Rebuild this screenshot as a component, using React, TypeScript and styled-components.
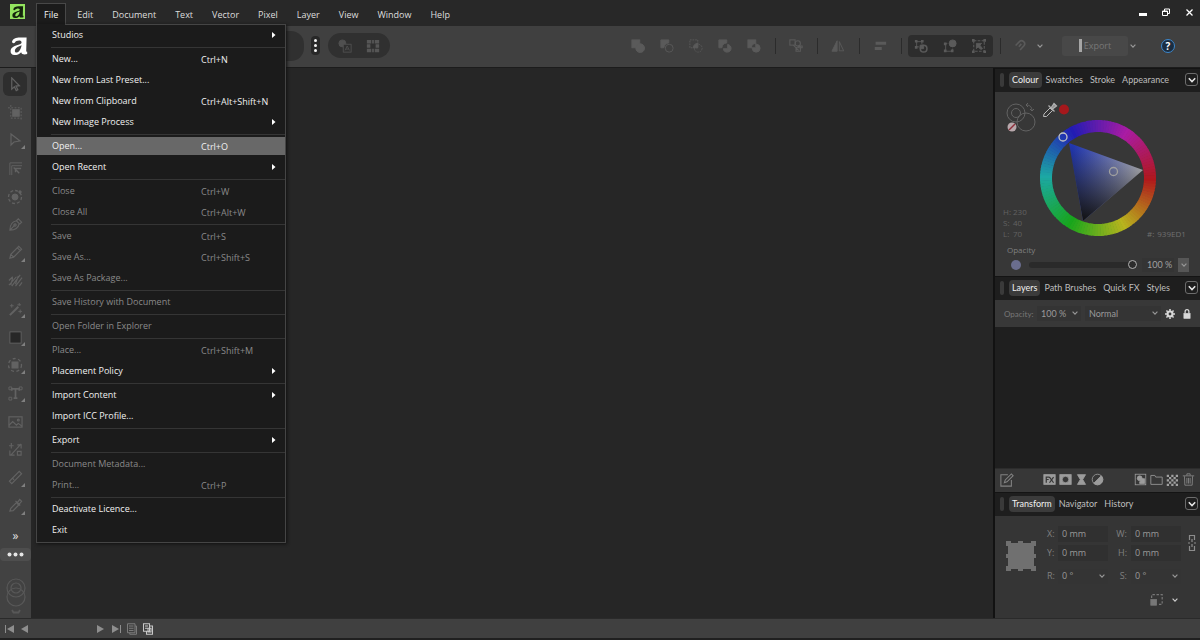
import React from 'react';
import styled, { createGlobalStyle, css } from 'styled-components';

const Global = createGlobalStyle`
  * { box-sizing: border-box; }
  html, body, #root { height: 100%; }
  body {
    margin: 0;
    background: #262626;
    color: #dcdcdc;
    font: 9px/12px "Open Sans", "Noto Sans", sans-serif;
    overflow: hidden;
  }
  button, input, select { font: inherit; color: inherit; border: 0; margin: 0; padding: 0; background: none; border-radius: 0; outline: none; }
  svg { display: block; flex: none; }
`;

/* ---------- shell ---------- */

const Shell = styled.div`
  display: flex;
  flex-direction: column;
  min-height: 100vh;
`;

const TitleBar = styled.header`
  display: flex;
  align-items: stretch;
  height: 26px;
  flex: none;
  padding: 3px 6px 0 10px;
  background: #282828;
`;

const AppMark = styled.div`
  width: 15px;
  height: 15px;
  margin: 1px 11px 0 0;
  background: #93e45f;
  display: grid;
  place-items: center;
`;

const MenuNav = styled.nav`
  display: flex;
  gap: 3px;
  flex: 1;
`;

const MenuSlot = styled.div`
  position: relative;
  display: flex;
`;

const MenuTitle = styled.button<{ $open?: boolean }>`
  padding: 0 7px;
  height: 22px;
  border: 1px solid transparent;
  border-bottom: 0;
  color: #dedede;
  ${(p) =>
    p.$open &&
    css`
      background: #1b1b1b;
      border-color: #484848;
      color: #f4f4f4;
    `}
`;

const WindowButtons = styled.div`
  display: flex;
  align-items: center;
  gap: 13px;
  height: 18px;
`;

const IconButton = styled.button<{ $size?: number; $color?: string }>`
  width: ${(p) => p.$size ?? 14}px;
  height: ${(p) => p.$size ?? 14}px;
  display: grid;
  place-items: center;
  flex: none;
  color: ${(p) => p.$color ?? '#5a5a5a'};
`;

/* ---------- drop-down menu ---------- */

const Menu = styled.div`
  position: absolute;
  z-index: 5;
  top: 21px;
  left: 0;
  width: 250px;
  padding-top: 1px;
  display: flex;
  flex-direction: column;
  background: #1b1b1b;
  border: 1px solid #454545;
  box-shadow: 1px 1px 3px #111;

  &::before {
    content: "";
    position: absolute;
    top: -1px;
    left: 0;
    width: 28px;
    height: 1px;
    background: #1b1b1b;
  }
`;

const MenuRow = styled.button<{ $dim?: boolean; $active?: boolean }>`
  display: grid;
  grid-template-columns: 149px 1fr 13px;
  align-items: center;
  height: 18px;
  margin: 0 0 3px;
  padding-left: 15px;
  text-align: left;
  white-space: nowrap;
  color: ${(p) => (p.$dim ? '#8a8a8a' : '#f0f0f0')};
  background: ${(p) => (p.$active ? '#686868' : 'transparent')};
`;

const Shortcut = styled.span`
  padding-top: 2px;
`;

const MenuRule = styled.hr`
  width: calc(100% - 14px);
  height: 1px;
  margin: 0 0 2px 14px;
  border: 0;
  background: #353535;
`;

/* ---------- toolbar ---------- */

const Toolbar = styled.div`
  display: flex;
  align-items: center;
  flex: none;
  height: 42px;
  padding: 0 25px 2px 10px;
  background: #404040;
  border-bottom: 1px solid #1c1c1c;
`;

const ToolbarLead = styled.div`
  display: flex;
  align-items: center;
  flex: 1;
  padding-left: 26px;
`;

const Pill = styled.div<{ $width: number; $height: number }>`
  display: flex;
  align-items: center;
  justify-content: center;
  gap: 14px;
  width: ${(p) => p.$width}px;
  height: ${(p) => p.$height}px;
  border-radius: 13px;
  background: #303030;
`;

const Kebab = styled.button`
  width: 9px;
  height: 19px;
  margin: 0 8px 0 7px;
  border-radius: 4px;
  background: #282828;
  color: #f2f2f2;
  display: grid;
  place-items: center;
`;

const Spacer = styled.div`
  flex: 1;
`;

const Cluster = styled.div`
  display: flex;
  gap: 15px;
`;

const Snapping = styled(Cluster)`
  align-items: center;
  padding: 0 7px 0 6px;
  height: 22px;
  border-radius: 4px;
  background: #2d2d2d;
`;

const Divider = styled.span<{ $before: number; $after: number }>`
  width: 1px;
  height: 16px;
  margin: 0 ${(p) => p.$after}px 0 ${(p) => p.$before}px;
  background: #2b2b2b;
`;

const ChevronButton = styled.button<{ $before?: number; $after?: number; $color?: string }>`
  width: 8px;
  height: 12px;
  display: grid;
  place-items: center;
  color: ${(p) => p.$color ?? '#9a9a9a'};
  margin: 0 ${(p) => p.$after ?? 0}px 0 ${(p) => p.$before ?? 0}px;
`;

const ExportButton = styled.button`
  display: flex;
  align-items: center;
  justify-content: center;
  gap: 2px;
  width: 66px;
  height: 20px;
  border-radius: 3px;
  background: #484848;
  color: #777;

  &::before {
    content: "";
    width: 3px;
    height: 13px;
    background: #a6a6a6;
  }
`;

const HelpButton = styled.button`
  width: 14px;
  height: 14px;
  border: 1px solid #3d87cc;
  border-radius: 50%;
  background: #1b2d40;
  color: #fff;
  font-size: 10px;
  font-weight: 700;
  line-height: 12px;
`;

/* ---------- body ---------- */

const Body = styled.main`
  display: flex;
  flex: 1;
  min-height: 0;
`;

const Tools = styled.aside`
  width: 31px;
  flex: none;
  display: flex;
  flex-direction: column;
  padding-top: 4px;
  background: #424242;
`;

const ToolList = styled.div`
  flex: 1;
  display: flex;
  flex-direction: column;
  justify-content: space-between;
  align-items: flex-start;
  padding-left: 3px;
`;

const Tool = styled.button<{ $active?: boolean; $more?: boolean }>`
  position: relative;
  width: 24px;
  height: 24px;
  display: grid;
  place-items: center;
  border-radius: 6px;
  color: #626262;
  background: ${(p) => (p.$active ? '#2e2e2e' : 'transparent')};
  ${(p) =>
    p.$more &&
    css`
      &::after {
        content: "";
        position: absolute;
        right: 2px;
        bottom: 3px;
        border: 2px solid;
        border-color: transparent #808080 #808080 transparent;
      }
    `}
`;

const ToolFooter = styled.div`
  display: flex;
  flex-direction: column;
  align-items: center;
  padding: 12px 0 2px;
  color: #585858;
`;

const Expand = styled.button`
  height: 12px;
  color: #e0e0e0;
  font-size: 12px;
`;

const MoreTools = styled.button`
  width: 100%;
  height: 13px;
  margin: 6px 0 16px;
  border-radius: 4px;
  background: #4e4e4e;
  color: #e6e6e6;
  display: grid;
  place-items: center;
`;

const Canvas = styled.section`
  flex: 1;
  background: #262626;
`;

/* ---------- panels ---------- */

const Panels = styled.aside`
  width: 207px;
  flex: none;
  display: flex;
  flex-direction: column;
  border-left: 2px solid #121212;
  background: #373737;
`;

const TabBar = styled.div`
  display: flex;
  align-items: center;
  gap: 1px;
  height: 24px;
  flex: none;
  padding: 0 2px 2px 5px;
  background: #1e1e1e;
  border-top: 1px solid #141414;
`;

const Grip = styled.span`
  width: 4px;
  height: 14px;
  margin-right: 4px;
  border-radius: 2px;
  background: #3a3a3a;
`;

const Tab = styled.button<{ $active?: boolean }>`
  height: 16px;
  padding: 0 3px;
  border-radius: 4px;
  white-space: nowrap;
  font-family: Lato, "Open Sans", sans-serif;
  color: ${(p) => (p.$active ? '#f0f0f0' : '#bdbdbd')};
  background: ${(p) => (p.$active ? '#3b3b3b' : 'transparent')};
`;

const PanelMenu = styled.button`
  width: 13px;
  height: 13px;
  margin-left: auto;
  border: 1px solid #6c6c6c;
  border-radius: 3px;
  color: #e8e8e8;
  display: grid;
  place-items: center;
`;

const ColourBody = styled.div`
  display: flex;
  flex-direction: column;
  height: 184px;
  flex: none;
  padding: 8px 11px 0 6px;
`;

const Picker = styled.div`
  display: flex;
  align-items: stretch;
  height: 144px;
`;

const PickerSide = styled.div`
  width: 39px;
  flex: none;
  display: flex;
  flex-direction: column;
  align-items: flex-end;
  justify-content: space-between;
  padding: 2px 0 5px;
`;

const Readout = styled.dl`
  display: grid;
  grid-template-columns: 10px 1fr;
  width: 37px;
  margin: 0;
  font-size: 8px;
  line-height: 11px;
  color: #626262;
  dt, dd { margin: 0; }
`;

const HexLabel = styled.label`
  display: flex;
  gap: 3px;
  align-items: center;
  align-self: flex-end;
  margin: 0 0 4px -9px;
  font-size: 8px;
  color: #707070;
  input { width: 34px; height: 12px; }
`;

const OpacityLabel = styled.label`
  padding: 1px 0 2px 6px;
  font-size: 8px;
  line-height: 10px;
  color: #808080;
`;

const OpacityRow = styled.div`
  display: flex;
  align-items: center;
  height: 15px;
  padding-left: 10px;
`;

const OpacityDot = styled.span`
  width: 10px;
  height: 10px;
  margin-right: 8px;
  border-radius: 50%;
  background: #6a6d8e;
`;

const Slider = styled.input`
  appearance: none;
  flex: 1;
  min-width: 0;
  height: 6px;
  border-radius: 3px;
  background: #2a2a2a;
  &::-webkit-slider-thumb {
    appearance: none;
    width: 9px;
    height: 9px;
    border: 1px solid #b4b4b4;
    border-radius: 50%;
    background: #2c2c2c;
  }
`;

const PercentInput = styled.input`
  width: 32px;
  height: 14px;
  margin: 0 4px 0 5px;
  padding-left: 5px;
  background: #343434;
  color: #a0a0a0;
  font-family: Lato, "Open Sans", sans-serif;
`;

const StepButton = styled.button`
  width: 11px;
  height: 14px;
  background: #565656;
  color: #999;
  display: grid;
  place-items: center;
`;

const LayerOptions = styled.div`
  display: flex;
  align-items: center;
  height: 27px;
  flex: none;
  padding: 0 8px 0 9px;
  background: #383838;
  color: #777;
  font-family: Lato, "Open Sans", sans-serif;
  label { width: 33px; white-space: nowrap; font-size: 8px; }
`;

const SelectBox = styled.span<{ $width: number; $before?: number; $after?: number }>`
  position: relative;
  width: ${(p) => p.$width}px;
  height: 15px;
  margin: 0 ${(p) => p.$after ?? 0}px 0 ${(p) => p.$before ?? 0}px;
  background: #343434;
  select {
    appearance: none;
    width: 100%;
    height: 15px;
    padding: 0 12px 0 4px;
    color: #9a9a9a;
    border-radius: 2px;
  }
  svg { position: absolute; right: 3px; top: 4px; color: #999; pointer-events: none; }
`;

const LayerList = styled.div`
  flex: 1;
  background: #1f1f1f;
`;

const LayerActions = styled.div`
  display: flex;
  align-items: center;
  gap: 2px;
  height: 24px;
  flex: none;
  padding: 0 5px 2px;
  background: #373737;
  border-top: 1px solid #2c2c2c;
`;

const TransformBody = styled.div`
  display: grid;
  grid-template-columns: 41px 11px 50px 23px 50px 1fr;
  grid-template-rows: 17px 17px 26px;
  row-gap: 2px;
  align-items: center;
  align-content: start;
  height: 102px;
  flex: none;
  padding: 9px 4px 0 11px;
  background: #353535;
  color: #808080;
  label { text-align: right; padding-right: 4px; }
`;

const Field = styled.input`
  width: 100%;
  height: 16px;
  padding-left: 4px;
  background: #303030;
  color: #9a9a9a;
`;

const Anchor = styled.div`
  grid-column: 1;
  grid-row: 1 / 4;
  align-self: start;
  padding-top: 16px;
`;

const LinkToggle = styled.button`
  grid-column: 6;
  grid-row: 1 / 3;
  justify-self: end;
  color: #8c8c8c;
`;

const ScaleMode = styled.div`
  grid-column: 1 / -1;
  display: flex;
  align-items: center;
  gap: 8px;
  justify-self: end;
  padding: 2px 17px 0 0;
`;

const StatusBar = styled.footer`
  display: flex;
  align-items: center;
  gap: 2px;
  height: 22px;
  flex: none;
  padding: 0 3px;
  background: #404040;
  border-top: 1px solid #2a2a2a;
  border-bottom: 2px solid #202020;
`;

const PageName = styled.span`
  width: 59px;
`;

/* ---------- drawings ---------- */

const Chevron = ({ w = 6 }: { w?: number }) => (
  <svg width={w} height={w} viewBox="0 0 6 6" fill="none" stroke="currentColor" strokeWidth="1.1">
    <path d="M.6 1.6 3 4.2 5.4 1.6" />
  </svg>
);

const Logo = ({ size, color }: { size: number; color: string }) => (
  <svg width={size} height={size} viewBox="0 0 18 18" fill={color}>
    <path
      fillRule="evenodd"
      d="M2 4.800C2.800 1.600 6 .4 10 .4h6.600L16.200 14.600l1 .2V17c-2 .6-5.800.8-6-1.800C9.500 17.200 7 18 4.600 18 1.600 18 .4 16.200.6 13.800 1 10 5 9 9.200 7.600c2-.7 2.900-1.900 2.100-3.200C10.200 2.900 5.600 3.600 4.800 5.800 3.800 6.600 2 6.200 2 4.800zM11.600 8.200C8.400 9.300 5.300 10.600 4.900 13.500c-.2 1.700.8 2.300 2 2 2.300-.5 4.200-4 4.700-7.300z"
    />
  </svg>
);

const draw = (children: React.ReactNode, size = 16, w = 1) => (
  <svg width={size} height={size} viewBox="0 0 16 16" fill="none" stroke="currentColor" strokeWidth={w}>
    {children}
  </svg>
);

const toolIcons: { name: string; more?: boolean; art: React.ReactNode }[] = [
  { name: 'Move', art: draw(<path d="M4 1v12l2.800-2.500 2 4 1.700-.9-2-3.900 3.700-.4z" />, 15, 1.3) },
  { name: 'Artboard', art: draw(<><rect x="5" y="5" width="7" height="7" fill="currentColor" /><path d="M3 0v14h11M0 3h14v13" strokeDasharray="2 1.5" /></>, 15) },
  { name: 'Node', more: true, art: draw(<path d="M4 2v11l3-3 6-1z" />, 16, 1.2) },
  { name: 'Corner', art: draw(<><path d="M2 15V2h13M4 15V5h11" /><path d="M6 7l6 6M8 12V8h6" strokeWidth="1.5" /></>, 15) },
  { name: 'Contour', art: draw(<><circle cx="8" cy="8" r="3" fill="currentColor" /><circle cx="8" cy="8" r="6.500" strokeDasharray="3 2" strokeWidth="1.3" /><circle cx="13" cy="3" r="1.200" fill="currentColor" /></>) },
  { name: 'Pen', art: draw(<><path d="M2 14C2 9 4 5 9 4l3 3c-1 5-5 7-10 7zl5-5M9 4l2-2 3.500 3.500-2 2" /><circle cx="7.500" cy="8.500" r="1.200" /></>, 15, 1.2) },
  { name: 'Pencil', more: true, art: draw(<path d="M2 14l1-4 8.500-8.500 3 3L6 13zM3 10l3 3M10 3l3 3" />, 15, 1.2) },
  { name: 'Vector brush', art: draw(<path d="M1 8l4-4M1 13l8-9M4 14L13 2M8 14l7-9M12 14l3-4M5 5l-2 8M11 3l-3 9" strokeWidth="1.2" />, 15) },
  { name: 'Fill', more: true, art: draw(<><path d="M2 14L11 5" strokeWidth="2.2" /><path d="M12 1v3M14 3h-4M4 2v4M2 4h4M13 8v4M11 10h4" /></>, 15) },
  { name: 'Rectangle', more: true, art: draw(<rect x="2" y="2" width="12" height="12" fill="#272727" />, 15) },
  { name: 'Crop', more: true, art: draw(<><rect x="5" y="5" width="6" height="6" fill="currentColor" /><circle cx="8" cy="8" r="6.500" strokeDasharray="3 2.5" strokeWidth="1.3" /></>) },
  { name: 'Frame text', more: true, art: draw(<><path d="M4 5V3h8v2M8 3v10M6 13h4" strokeWidth="1.8" /><path d="M1 1h3v3H1zM12 1h3v3h-3zM1 12h3v3H1z" /></>, 15) },
  { name: 'Place image', art: draw(<><rect x="1" y="3" width="14" height="11" /><path d="M1 12l4-4 4 4 2-2 4 3" /><circle cx="11" cy="6.500" r="1" /></>, 15, 1.2) },
  { name: 'Transform', art: draw(<path d="M3 14L14 2M1 4h5M3.500 1v6M10 3h4v4M2 9v5h5M10 10v4h4v-4z" />, 15, 1.2) },
  { name: 'Measure', more: true, art: draw(<path d="M1.500 12L12 1.500l2.500 2.500L4 14.500zM5 9l1.500 1.500" />, 15, 1.2) },
  { name: 'Colour picker', more: true, art: draw(<><path d="M2 14l1-3 6-6 2.500 2.500-6 6z" /><path d="M8 3l5 5M10 5l2.500-3.500 2 2L11.500 7z" /></>, 15, 1.3) },
];

const booleanIcons: [string, React.ReactNode][] = [
  ['Add', <g fill="currentColor"><rect x="1" y="1" width="9" height="9" /><circle cx="10.500" cy="10.500" r="5" /></g>],
  ['Subtract', <><path d="M1 1h9v3.500A6 6 0 0 0 4.500 10H1z" fill="currentColor" /><circle cx="10.500" cy="10.500" r="4.500" /></>],
  ['Intersect', <><rect x="1" y="1" width="9" height="9" strokeDasharray="2 1" /><circle cx="10.500" cy="10.500" r="4.500" strokeDasharray="2 1" /><path d="M10 5v5H5c0-3 2-5 5-5z" fill="currentColor" /></>],
  ['Divide', <><path d="M1 1h9v3.500A6 6 0 0 0 4.500 10H1z" fill="currentColor" /><path d="M11 6c3 1 4 3 4 5s-2 4-4.500 4-4-1-4.500-4h5z" fill="currentColor" /></>],
  ['Exclude', <><rect x="1" y="1" width="9" height="9" fill="currentColor" /><circle cx="10.500" cy="10.500" r="4.500" fill="currentColor" /><path d="M10 5v5H5c0-3 2-5 5-5z" fill="#404040" /></>],
];

const snapIcons: [string, React.ReactNode][] = [
  ['Edit shape', <><path d="M3 3h6v3M3 3v6h3" /><path d="M1 1h3v3H1zM8 1h3v3H8zM1 8h3v3H1z" fill="currentColor" stroke="none" /><path d="M7 7h4v4H7z" fill="currentColor" /><circle cx="11" cy="11" r="3.800" strokeWidth="1.8" /></>],
  ['Insert target', <><circle cx="11" cy="5" r="4" fill="currentColor" /><path d="M5 5H3v9h8v-3" /><path d="M1 4h3v3H1zM1 12h3v3H1zM9 12h3v3H9z" fill="currentColor" stroke="none" /></>],
  ['Lock children', <><rect x="2" y="2" width="12" height="12" strokeDasharray="3 1.5" strokeWidth="1.2" /><path d="M5 5h6l-2 2 3 4-2 1-3-3-2 2z" fill="currentColor" /><path d="M0 0h3v3H0zM13 0h3v3h-3zM0 13h3v3H0zM13 13h3v3h-3z" fill="currentColor" stroke="none" /></>],
];

const hueStops = [
  [176, 24, 28],
  [184, 180, 30],
  [24, 166, 28],
  [28, 168, 164],
  [34, 28, 180],
  [170, 28, 164],
  [176, 24, 28],
];

function hueColor(deg: number) {
  const i = Math.floor(deg / 60);
  const f = (deg - i * 60) / 60;
  const mix = hueStops[i].map((v, k) => Math.round(v + (hueStops[i + 1][k] - v) * f));
  return `rgb(${mix.join(',')})`;
}

function HueWheel() {
  const step = 3;
  const at = (deg: number, r: number) => {
    const a = (deg * Math.PI) / 180;
    return `${58 + r * Math.cos(a)} ${78 + r * Math.sin(a)}`;
  };
  return (
    <svg width="116" height="138" viewBox="0 0 116 138" role="img" aria-label="Colour wheel">
      <defs>
        <linearGradient id="tint" gradientUnits="userSpaceOnUse" x1="32" y1="53" x2="103" y2="70">
          <stop offset="0" stopColor="#2238b4" />
          <stop offset="1" stopColor="#acacac" />
        </linearGradient>
        <linearGradient id="shade" gradientUnits="userSpaceOnUse" x1="63" y1="52" x2="43" y2="121">
          <stop offset="0" stopColor="#111" stopOpacity="0" />
          <stop offset="1" stopColor="#111" />
        </linearGradient>
      </defs>
      {Array.from({ length: 360 / step }, (_, i) => (
        <path
          key={i}
          d={`M${at(i * step, 52)}A52 52 0 0 1 ${at((i + 1) * step + 0.6, 52)}`}
          fill="none"
          stroke={hueColor(i * step)}
          strokeWidth="12"
        />
      ))}
      <path d="M29 43 103 70 43 121z" fill="url(#tint)" />
      <path d="M29 43 103 70 43 121z" fill="url(#shade)" />
      <g fill="none" stroke="#c4c4c4" strokeWidth="1.3">
        <circle cx="23" cy="37" r="4" />
        <circle cx="73.500" cy="71.500" r="4" stroke="#a0a0a0" />
        <path d="M3.500 16.500 4 14l6-6 2.500 2.500-6 6z" stroke="#b8b8b8" strokeWidth="1" />
        <path d="M8.500 5.500l6 6M11 8l3-4.500 2.500 2.500L12.500 9z" fill="#909090" stroke="#b0b0b0" />
      </g>
      <circle cx="24" cy="9.500" r="5" fill="#a5181c" />
    </svg>
  );
}

const SwatchPair = () => (
  <svg width="34" height="32" viewBox="0 0 34 32" fill="none" stroke="#636363">
    <circle cx="10" cy="11" r="9" />
    <circle cx="10" cy="11" r="4.500" />
    <circle cx="20" cy="20" r="9" />
    <path d="M20 3c4 0 6 2 6 6M20 3l2-2M20 3l2 2M26 9l-2-2M26 9l2-2" />
    <circle cx="6" cy="25" r="4.500" fill="#b8a8ac" stroke="none" />
    <path d="M3 28l6-6" stroke="#8e2f3a" strokeWidth="1.5" />
  </svg>
);

const layerIcons: [string, React.ReactNode][] = [
  ['Layer effects', <><rect x="1" y="2" width="14" height="12" fill="currentColor" /><path d="M4 12V5h4M4 8h3M8 5l5 7M13 5l-5 7" stroke="#373737" strokeWidth="1.5" /></>],
  ['Mask', <><rect x="1" y="2" width="14" height="12" fill="currentColor" /><circle cx="8" cy="8" r="4" fill="#373737" /></>],
  ['Live filter', <path d="M3 2h10L9.500 8 13 14H3l3.500-6z" fill="currentColor" />],
  ['Adjustment', <><circle cx="8" cy="8" r="6.500" /><path d="M12.600 3.400A6.500 6.500 0 0 1 3.400 12.600z" fill="currentColor" /></>],
];

/* ---------- data ---------- */

type Entry = { label: string; keys?: string; dim?: boolean; sub?: boolean; active?: boolean };

const fileMenu: Entry[][] = [
  [{ label: 'Studios', sub: true }],
  [
    { label: 'New...', keys: 'Ctrl+N' },
    { label: 'New from Last Preset...' },
    { label: 'New from Clipboard', keys: 'Ctrl+Alt+Shift+N' },
    { label: 'New Image Process', sub: true },
  ],
  [
    { label: 'Open...', keys: 'Ctrl+O', active: true },
    { label: 'Open Recent', sub: true },
  ],
  [
    { label: 'Close', keys: 'Ctrl+W', dim: true },
    { label: 'Close All', keys: 'Ctrl+Alt+W', dim: true },
  ],
  [
    { label: 'Save', keys: 'Ctrl+S', dim: true },
    { label: 'Save As...', keys: 'Ctrl+Shift+S', dim: true },
    { label: 'Save As Package...', dim: true },
  ],
  [{ label: 'Save History with Document', dim: true }],
  [{ label: 'Open Folder in Explorer', dim: true }],
  [
    { label: 'Place...', keys: 'Ctrl+Shift+M', dim: true },
    { label: 'Placement Policy', sub: true },
  ],
  [{ label: 'Import Content', sub: true }, { label: 'Import ICC Profile...' }],
  [{ label: 'Export', sub: true }],
  [
    { label: 'Document Metadata...', dim: true },
    { label: 'Print...', keys: 'Ctrl+P', dim: true },
  ],
  [{ label: 'Deactivate Licence...' }, { label: 'Exit' }],
];

const menuTitles = ['Edit', 'Document', 'Text', 'Vector', 'Pixel', 'Layer', 'View', 'Window', 'Help'];

/* ---------- parts ---------- */

function FileMenu() {
  return (
    <Menu role="menu">
      {fileMenu.map((group, g) => (
        <React.Fragment key={g}>
          {g > 0 && <MenuRule />}
          {group.map((e) => (
            <MenuRow key={e.label} role="menuitem" $dim={e.dim} $active={e.active}>
              <span>{e.label}</span>
              <Shortcut>{e.keys}</Shortcut>
              {e.sub && (
                <svg width="4" height="6" viewBox="0 0 4 6" fill="#fff">
                  <path d="M0 0l3.500 3L0 6z" />
                </svg>
              )}
            </MenuRow>
          ))}
        </React.Fragment>
      ))}
    </Menu>
  );
}

function Tabs({ names }: { names: string[] }) {
  return (
    <TabBar role="tablist">
      <Grip />
      {names.map((n, i) => (
        <Tab key={n} role="tab" aria-selected={i === 0} $active={i === 0}>
          {n}
        </Tab>
      ))}
      <PanelMenu aria-label="Panel menu">
        <Chevron w={8} />
      </PanelMenu>
    </TabBar>
  );
}

type SelectProps = { id: string; label?: string; value: string; width: number; before?: number; after?: number };

function Select({ id, label, value, width, before, after }: SelectProps) {
  return (
    <SelectBox $width={width} $before={before} $after={after}>
      <select id={id} aria-label={label} defaultValue={value}>
        <option>{value}</option>
      </select>
      <Chevron />
    </SelectBox>
  );
}

export default function App() {
  return (
    <Shell>
      <Global />
      <TitleBar>
        <AppMark>
          <Logo size={12} color="#14240c" />
        </AppMark>
        <MenuNav>
          <MenuSlot>
            <MenuTitle $open aria-expanded="true">
              File
            </MenuTitle>
            <FileMenu />
          </MenuSlot>
          {menuTitles.map((t) => (
            <MenuTitle key={t}>{t}</MenuTitle>
          ))}
        </MenuNav>
        <WindowButtons>
          <IconButton $size={10} $color="#fff" aria-label="Minimise">
            <svg width="8" height="10" viewBox="0 0 8 10" fill="currentColor"><path d="M0 6h8v3H0z" /></svg>
          </IconButton>
          <IconButton $size={10} $color="#fff" aria-label="Restore">
            <svg width="8" height="8" viewBox="0 0 8 8" fill="none" stroke="currentColor"><path d="M.5 3h5v4.500h-5zM2.500 3V1H7.500v4.500h-2M.5 3.500h5" /></svg>
          </IconButton>
          <IconButton $size={10} $color="#fff" aria-label="Close">
            <svg width="7" height="7" viewBox="0 0 7 7" stroke="currentColor" strokeWidth="1.3"><path d="M.5.5l6 6M6.500.5l-6 6" /></svg>
          </IconButton>
        </WindowButtons>
      </TitleBar>

      <Toolbar>
        <Logo size={18} color="#fff" />
        <ToolbarLead>
          <Pill $width={250} $height={30} />
          <Kebab aria-label="More studios">
            <svg width="3" height="13" viewBox="0 0 3 13" fill="currentColor">
              <circle cx="1.500" cy="1.500" r="1.500" /><circle cx="1.500" cy="6.500" r="1.500" /><circle cx="1.500" cy="11.500" r="1.500" />
            </svg>
          </Kebab>
          <Pill $width={62} $height={25}>
            <IconButton aria-label="Shape text" $color="#505050">
              {draw(<><circle cx="5" cy="5" r="4" fill="currentColor" /><rect x="6" y="6" width="9" height="9" fill="#303030" /><path d="M8 13l2.500-5 2.500 5M9 11.500h3" /></>, 14)}
            </IconButton>
            <IconButton aria-label="Grid" $color="#565656">
              {draw(<path d="M1 1h5v4H1zM7 1h2v4H7zM10 1h5v4h-5zM1 6h4v4H1zM11 6h4v4h-4zM1 11h5v4H1zM7 11h2v4H7zM10 11h5v4h-5z" fill="currentColor" stroke="none" />, 14)}
            </IconButton>
          </Pill>
        </ToolbarLead>
        <Cluster>
          {booleanIcons.map(([n, art]) => (
            <IconButton key={n} aria-label={n}>{draw(art, 14)}</IconButton>
          ))}
        </Cluster>
        <Divider $before={14} $after={13} />
        <IconButton aria-label="Shape builder">
          {draw(<><rect x="1" y="1" width="6" height="6" /><circle cx="10" cy="5" r="3" /><path d="M5 7l6 6M11 8h4v2h-4zM8 10l5-2v6H8z" /></>, 14, 1.2)}
        </IconButton>
        <Divider $before={14} $after={13} />
        <IconButton aria-label="Flip">
          {draw(<><path d="M7 2v12H1z" fill="currentColor" /><path d="M9.500 3v10.500h5z" /></>, 14)}
        </IconButton>
        <Divider $before={14} $after={13} />
        <IconButton aria-label="Align">
          {draw(<path d="M3 3h12v3.500H3zM2 9h8v3.500H2z" fill="currentColor" stroke="none" />, 14)}
        </IconButton>
        <Divider $before={14} $after={6} />
        <Snapping>
          {snapIcons.map(([n, art]) => (
            <IconButton key={n} aria-label={n}>{draw(art, 14)}</IconButton>
          ))}
        </Snapping>
        <Divider $before={7} $after={12} />
        <IconButton aria-label="Snapping">
          {draw(<path d="M2 8l5-5c3-2.500 8 1.500 5.500 5l-5 5.500M6 9.500l3-3.500" strokeWidth="2" />, 13)}
        </IconButton>
        <ChevronButton $before={9} $after={18} aria-label="Snapping options"><Chevron /></ChevronButton>
        <ExportButton>Export</ExportButton>
        <ChevronButton $before={1} $after={24} aria-label="Export options"><Chevron /></ChevronButton>
        <HelpButton>?</HelpButton>
      </Toolbar>

      <Body>
        <Tools>
          <ToolList>
            {toolIcons.map((t, i) => (
              <Tool key={t.name} aria-label={t.name} $active={i === 0} $more={t.more}>
                {t.art}
              </Tool>
            ))}
          </ToolList>
          <ToolFooter>
            <Expand aria-label="Expand">»</Expand>
            <MoreTools aria-label="More tools">
              <svg width="17" height="5" viewBox="0 0 17 5" fill="currentColor">
                <circle cx="2.500" cy="2.500" r="2" /><circle cx="8.500" cy="2.500" r="2" /><circle cx="14.500" cy="2.500" r="2" />
              </svg>
            </MoreTools>
            <svg width="22" height="39" viewBox="0 0 22 39" fill="none" stroke="currentColor" strokeWidth="1.2">
              <circle cx="11" cy="11" r="9" /><circle cx="11" cy="11" r="5" /><circle cx="11" cy="20" r="9" />
              <path d="M7 33l1.500 2.500h5L15 33" strokeWidth="1.8" />
            </svg>
          </ToolFooter>
        </Tools>
        <Canvas />
        <Panels>
          <Tabs names={['Colour', 'Swatches', 'Stroke', 'Appearance']} />
          <ColourBody>
            <Picker>
              <PickerSide>
                <SwatchPair />
                <Readout>
                  <dt>H:</dt><dd>230</dd>
                  <dt>S:</dt><dd>40</dd>
                  <dt>L:</dt><dd>70</dd>
                </Readout>
              </PickerSide>
              <HueWheel />
              <HexLabel>
                #: <input defaultValue="939ED1" />
              </HexLabel>
            </Picker>
            <OpacityLabel htmlFor="opacity">Opacity</OpacityLabel>
            <OpacityRow>
              <OpacityDot />
              <Slider id="opacity" type="range" defaultValue={100} />
              <PercentInput aria-label="Opacity value" defaultValue="100 %" />
              <StepButton aria-label="Opacity options"><Chevron /></StepButton>
            </OpacityRow>
          </ColourBody>

          <Tabs names={['Layers', 'Path Brushes', 'Quick FX', 'Styles']} />
          <LayerOptions>
            <label htmlFor="layer-opacity">Opacity:</label>
            <Select id="layer-opacity" value="100 %" width={44} />
            <Select id="blend" label="Blend mode" value="Normal" width={76} before={4} after={4} />
            <IconButton $size={10} $color="#d8d8d8" aria-label="Blend options">
              {draw(<><circle cx="8" cy="8" r="4" strokeWidth="3.5" /><path d="M8 0v3M8 13v3M0 8h3M13 8h3M2.300 2.300l2 2M11.700 11.700l2 2M2.300 13.700l2-2M11.700 4.300l2-2" strokeWidth="2.5" /></>, 10)}
            </IconButton>
            <Spacer />
            <IconButton $size={10} $color="#d8d8d8" aria-label="Lock">
              {draw(<><rect x="3" y="7" width="10" height="8" fill="currentColor" /><path d="M5 7V4a3 3 0 0 1 6 0v3" strokeWidth="2" /></>, 10)}
            </IconButton>
          </LayerOptions>
          <LayerList />
          <LayerActions>
            <IconButton $color="#838383" aria-label="Edit">
              {draw(<><path d="M9 2H1v13h12V8" /><path d="M5 11l1-3 7-7 2 2-7 7z" /></>, 14, 1.2)}
            </IconButton>
            <Spacer />
            {layerIcons.map(([n, art]) => (
              <IconButton key={n} $color="#9c9c9c" aria-label={n}>{draw(art, 13)}</IconButton>
            ))}
            <Spacer />
            <IconButton $color="#9c9c9c" aria-label="Crop mask">
              {draw(<><rect x="1.500" y="1.500" width="13" height="13" /><circle cx="7" cy="6.500" r="3" fill="currentColor" /><path d="M10 7h3v6H7v-2z" fill="currentColor" /></>, 13)}
            </IconButton>
            <IconButton $color="#8c8c8c" aria-label="Group">
              {draw(<path d="M1 14V3h5l1 2h8v9z" />, 13, 1.2)}
            </IconButton>
            <IconButton $color="#a0a0a0" aria-label="Add pixel layer">
              {draw(
                Array.from({ length: 25 }, (_, i) =>
                  i % 2 === 0 ? <rect key={i} x={1 + (i % 5) * 3} y={1 + Math.floor(i / 5) * 3} width="3" height="3" fill="currentColor" stroke="none" /> : null,
                ),
                12,
              )}
            </IconButton>
            <IconButton $color="#8c8c8c" aria-label="Delete">
              {draw(<path d="M1 3.500h14M6 3V1h4v2M3 4l.5 11h9L13 4M6 6v7M8 6v7M10 6v7" />, 13)}
            </IconButton>
          </LayerActions>

          <Tabs names={['Transform', 'Navigator', 'History']} />
          <TransformBody>
            <Anchor>
              <svg width="30" height="30" viewBox="0 0 30 30" fill="#707070">
                <path d="M0 0h5v2h7V0h5v2h8V0h5v5h-2v8h2v4h-2v8h2v5h-5v-2h-8v2h-5v-2H5v2H0v-5h2v-8H0v-4h2V5H0z" />
              </svg>
            </Anchor>
            <label htmlFor="fx">X:</label>
            <Field id="fx" defaultValue="0 mm" />
            <label htmlFor="fw">W:</label>
            <Field id="fw" defaultValue="0 mm" />
            <LinkToggle aria-label="Lock aspect ratio">
              <svg width="8" height="18" viewBox="0 0 8 18" fill="none" stroke="currentColor" strokeWidth="1.2">
                <path d="M1.500 6V1.500h5V6M1.500 12v4.500h5V12M4 5v3M4 10v3M0 9h2M6 9h2" />
              </svg>
            </LinkToggle>
            <label htmlFor="fy">Y:</label>
            <Field id="fy" defaultValue="0 mm" />
            <label htmlFor="fh">H:</label>
            <Field id="fh" defaultValue="0 mm" />
            <label htmlFor="fr">R:</label>
            <Select id="fr" value="0 °" width={50} />
            <label htmlFor="fs">S:</label>
            <Select id="fs" value="0 °" width={50} />
            <ScaleMode>
              <IconButton $size={13} $color="#777" aria-label="Scale mode">
                {draw(<><path d="M2 6V2h13v12H9" strokeDasharray="3 2" strokeWidth="1.5" /><rect x="1" y="8" width="7" height="7" fill="currentColor" /></>, 13)}
              </IconButton>
              <ChevronButton $color="#d0d0d0" aria-label="Scale options"><Chevron /></ChevronButton>
            </ScaleMode>
          </TransformBody>
        </Panels>
      </Body>

      <StatusBar>
        <IconButton $size={13} $color="#8e8e8e" aria-label="First page">
          <svg width="9" height="8" viewBox="0 0 9 8" fill="currentColor"><path d="M0 0h1v8H0zM9 0v8L2 4z" /></svg>
        </IconButton>
        <IconButton $size={13} $color="#8e8e8e" aria-label="Previous page">
          <svg width="7" height="8" viewBox="0 0 7 8" fill="currentColor"><path d="M7 0v8L0 4z" /></svg>
        </IconButton>
        <PageName />
        <IconButton $size={13} $color="#8e8e8e" aria-label="Next page">
          <svg width="7" height="8" viewBox="0 0 7 8" fill="currentColor"><path d="M0 0v8l7-4z" /></svg>
        </IconButton>
        <IconButton $size={14} $color="#8e8e8e" aria-label="Last page">
          <svg width="9" height="8" viewBox="0 0 9 8" fill="currentColor"><path d="M8 0h1v8H8zM0 0v8l7-4z" /></svg>
        </IconButton>
        <IconButton $size={14} $color="#7c7c7c" aria-label="Pages">
          {draw(<path d="M2 1h10v12H2zM12 4h2v11H5v-2M4 4h6M4 7h6M4 10h6" />, 12, 1.3)}
        </IconButton>
        <IconButton $size={14} $color="#c8c8c8" aria-label="Spreads">
          {draw(<path d="M2 1h8v10H2zM10 4h4v11H6v-4M4 4h4M4 7h8v5H8V7" />, 12, 1.4)}
        </IconButton>
      </StatusBar>
    </Shell>
  );
}
